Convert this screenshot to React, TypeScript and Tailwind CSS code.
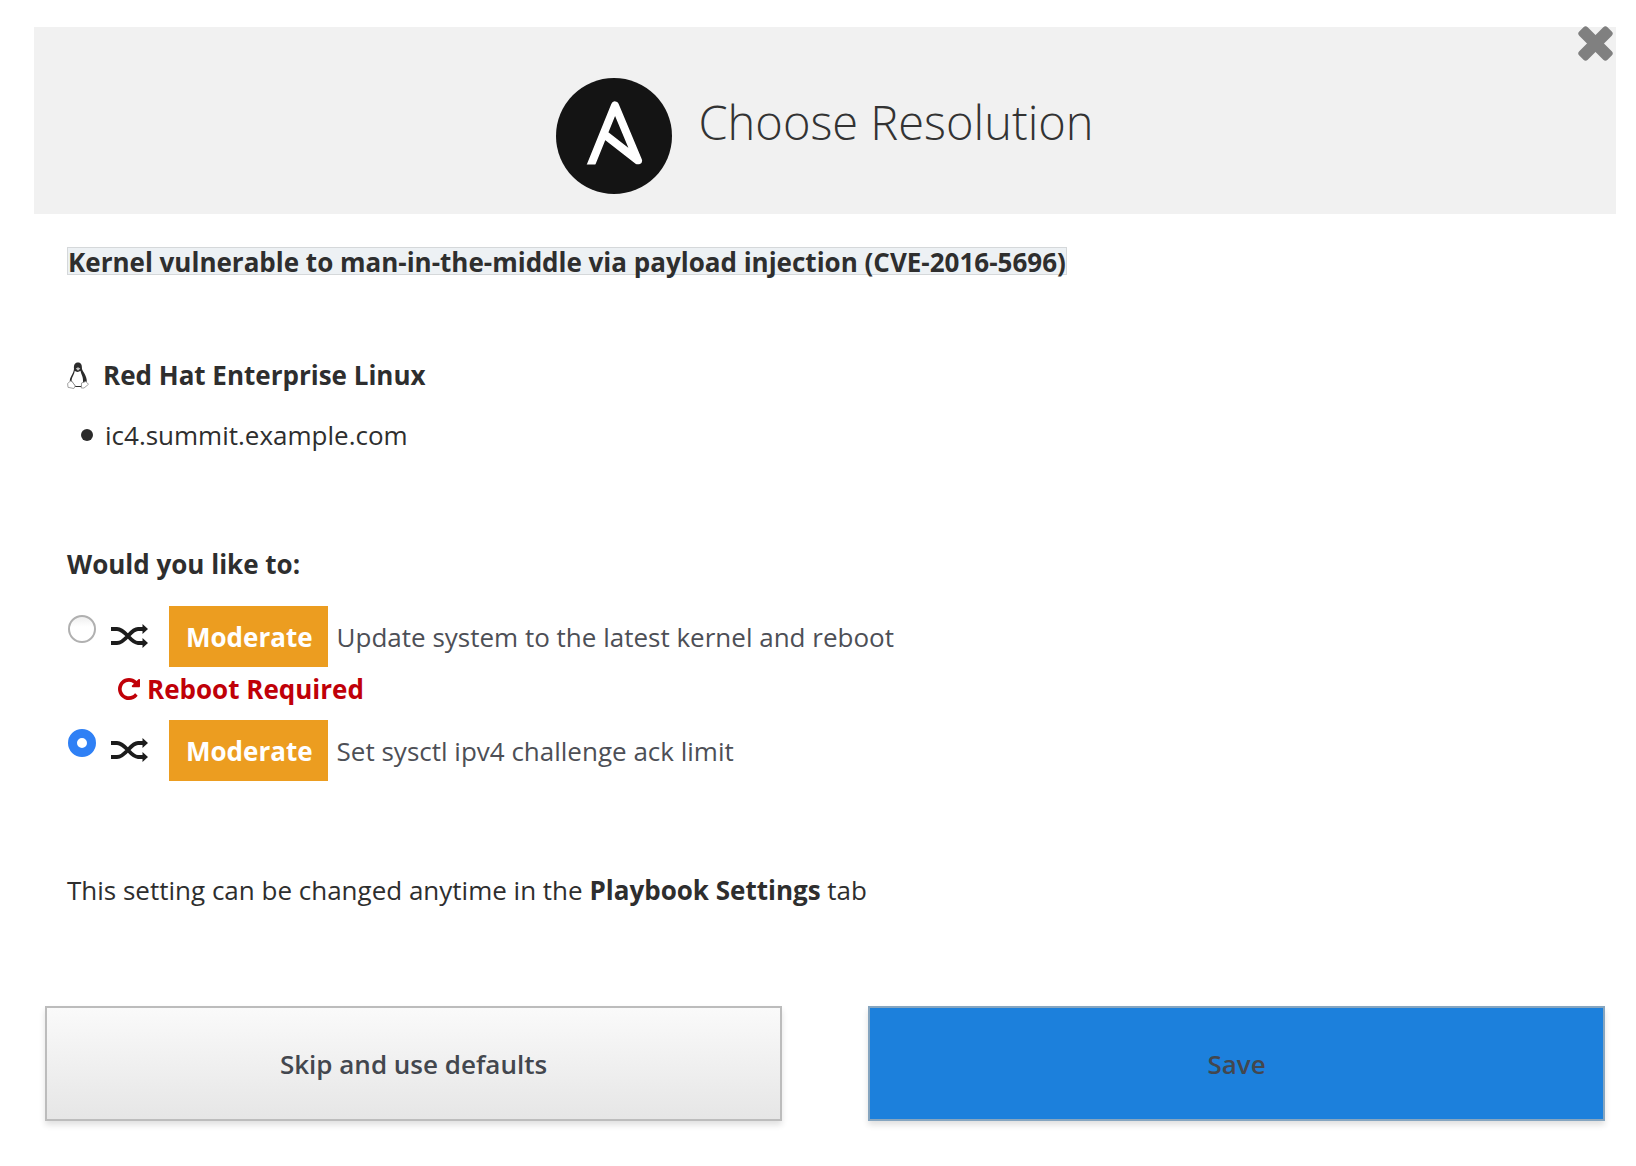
import React, { useState } from "react";

function AnsibleLogo() {
  return (
    <svg viewBox="0 0 116 116" className="mt-[51px] size-[116px] shrink-0" aria-hidden="true">
      <defs>
        <clipPath id="logo-foot">
          <rect width="116" height="86.5" />
        </clipPath>
      </defs>
      <circle cx="58" cy="58" r="58" fill="#141414" />
      <path
        d="M33.500 90.500 59 27.500 82 82.500 48 56"
        fill="none"
        stroke="#fff"
        strokeWidth="8"
        strokeLinejoin="round"
        clipPath="url(#logo-foot)"
      />
    </svg>
  );
}

function Penguin() {
  return (
    <svg viewBox="0 0 22 27" className="h-[27px] w-[22px] shrink-0" aria-hidden="true">
      <path
        d="M7 7C6.600 3 7.800 .6 11 .6S15 3 15 7C16 10 20 14 19.800 19.500L15 25H7.500L2.800 19.500C2.500 15 6.500 12 7 7Z"
        fill="#2b2b2b"
      />
      <path d="M7.800 8.800C9 10.300 12 10.300 13.500 8.800 14 12 16.500 15 16 20L14 24H8.500L4.500 18.500C4.700 15 7.500 12.500 7.800 8.800Z" fill="#fff" />
      <path d="M8.800 6.500 11 5.300 13.300 6.500 11 8.800Z" fill="#c4c4c4" />
      <path d="M.6 21.500 3.500 19 5 19.500 8.300 24 6.800 26.500 1 25.300Z" fill="#fff" stroke="#8a8a8a" strokeWidth=".8" />
      <path d="M21.500 22.300 18.800 19.500 14.500 21 14.300 26 17 26Z" fill="#fff" stroke="#8a8a8a" strokeWidth=".8" />
    </svg>
  );
}

function Shuffle() {
  return (
    <svg viewBox="0 0 37 24" className="mt-[18px] h-[24px] w-[37px] shrink-0" aria-hidden="true">
      <path
        d="M0 5H6C15 5 19 19 27 19H33M0 19H6C15 19 19 5 27 5H33"
        fill="none"
        stroke="#1c1c1c"
        strokeWidth="3.800"
      />
      <path d="M31.500 0 37 5 31.500 10ZM31.500 14 37 19 31.500 24Z" fill="#1c1c1c" />
    </svg>
  );
}

function Repeat() {
  return (
    <svg viewBox="0 0 1536 1536" className="size-[22px] shrink-0" fill="currentColor" aria-hidden="true">
      <path d="M1536 128v448q0 26-19 45t-45 19h-448q-42 0-59-40-17-39 14-69l138-138q-148-137-349-137-104 0-198.500 40.500t-163.500 109.500-109.500 163.500-40.500 198.500 40.500 198.500 109.500 163.500 163.500 109.500 198.500 40.500q119 0 225-52t179-147q7-10 23-12 15 0 25 9l137 138q9 8 9.500 20.500t-7.500 22.500q-109 132-264 204.500t-327 72.500q-156 0-298-61t-245-164-164-245-61-298 61-298 164-245 245-164 298-61q147 0 284.500 55.500t244.500 156.500l130-129q29-31 70-14 39 17 39 59z" />
    </svg>
  );
}

function Close() {
  return (
    <svg viewBox="0 0 35 35" className="size-[35px]" fill="#808080" aria-hidden="true">
      <rect x="-2.5" y="11.500" width="40" height="12" rx="3" transform="rotate(45 17.5 17.5)" />
      <rect x="-2.5" y="11.500" width="40" height="12" rx="3" transform="rotate(-45 17.5 17.5)" />
    </svg>
  );
}

type Option = { id: string; label: string; reboot: boolean };

const options: Option[] = [
  { id: "update", label: "Update system to the latest kernel and reboot", reboot: true },
  { id: "sysctl", label: "Set sysctl ipv4 challenge ack limit", reboot: false },
];

const radioOff = "border-2 border-[#b0b0b0] bg-linear-to-b from-[#efefef] to-white to-40%";
const radioOn = "border-[9px] border-[#2f80f5] bg-white";

export default function App() {
  const [choice, setChoice] = useState("sysctl");
  return (
    <main className="min-h-screen bg-white pt-[27px] pr-5 pb-[46px] pl-[34px] font-['Open_Sans',sans-serif] text-[26px] leading-9 text-[#2e2e2e]">
      <header className="relative flex h-[187px] items-start justify-center gap-[26px] bg-[#f1f1f1]">
        <AnsibleLogo />
        <h1 className="mt-[62px] text-[47px] leading-[66px] font-light text-[#333]">Choose Resolution</h1>
        <button type="button" aria-label="Close" className="absolute -top-px right-[3px]">
          <Close />
        </button>
      </header>

      <section className="px-[33px]">
        <h2 className="mt-[33px] w-fit border border-[#d5d8da] bg-[#edf1f4] pt-0.5 leading-6 font-bold">
          Kernel vulnerable to man-in-the-middle via payload injection (CVE-2016-5696)
        </h2>

        <h3 className="mt-[82px] flex items-center gap-[14px] font-bold">
          <Penguin />
          Red Hat Enterprise Linux
        </h3>
        <ul className="mt-6">
          <li className="flex items-center gap-3 pl-[14px]">
            <span className="size-3 rounded-full bg-[#2b2b2b]" />
            ic4.summit.example.com
          </li>
        </ul>

        <fieldset className="mt-[93px]">
          <legend className="font-bold">Would you like to:</legend>
          <div className="mt-6 flex flex-col gap-[13px]">
            {options.map((o) => (
              <div key={o.id}>
                <label className="flex items-start text-[#4d4f56]">
                  <input
                    type="radio"
                    name="resolution"
                    checked={choice === o.id}
                    onChange={() => setChoice(o.id)}
                    className={`mt-[9px] mr-[15px] ml-px size-7 shrink-0 appearance-none rounded-full ${choice === o.id ? radioOn : radioOff}`}
                  />
                  <Shuffle />
                  <span className="mr-[9px] ml-[21px] bg-[#ec9d20] pt-[13px] pr-[15px] pb-3 pl-[17px] font-bold text-white">
                    Moderate
                  </span>
                  <span className="pt-[13px] pb-3">{o.label}</span>
                </label>
                {o.reboot && (
                  <p className="mt-1 flex items-center gap-[7px] pl-[51px] font-bold text-[#c00008]">
                    <Repeat />
                    Reboot Required
                  </p>
                )}
              </div>
            ))}
          </div>
        </fieldset>

        <p className="mt-[91px]">
          This setting can be changed anytime in the <b>Playbook Settings</b> tab
        </p>
      </section>

      <footer className="mt-[98px] grid grid-cols-2 gap-[86px] px-[11px]">
        <button
          type="button"
          className="h-[115px] border-2 border-[#bcbcbc] bg-linear-to-b from-[#fafafa] to-[#e6e6e6] font-semibold text-[#43474e] shadow-[0_4px_6px_rgba(0,0,0,0.12)]"
        >
          Skip and use defaults
        </button>
        <button
          type="button"
          className="h-[115px] border-2 border-[#86a5bf] bg-[#1c80dc] font-semibold text-[#43474e] shadow-[0_4px_6px_rgba(0,0,0,0.12)]"
        >
          Save
        </button>
      </footer>
    </main>
  );
}
